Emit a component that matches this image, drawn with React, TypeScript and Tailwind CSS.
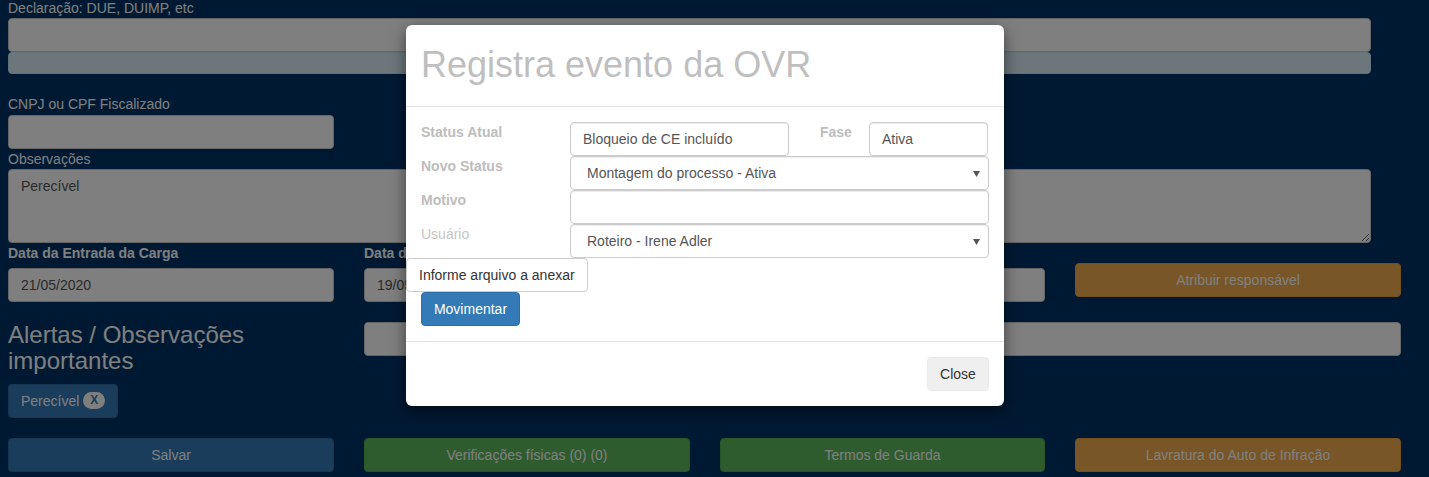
import React from 'react';

const FONT = "font-['Liberation_Sans',Arial,sans-serif]";

function PageInput({ value = '', className = '' }: { value?: string; className?: string }) {
  return (
    <div className={`h-[34px] bg-white border border-[#ccc] rounded-[4px] px-[12px] py-[6px] text-[#555] ${className}`}>
      {value}
    </div>
  );
}

function PageButton({ label, tone }: { label: string; tone: 'blue' | 'green' | 'orange' }) {
  const tones = {
    blue: 'bg-[#337ab7] border-[#2e6da4]',
    green: 'bg-[#5cb85c] border-[#4cae4c]',
    orange: 'bg-[#f0ad4e] border-[#eea236]',
  };
  return (
    <div className={`h-[34px] flex items-center justify-center border rounded-[4px] text-white ${tones[tone]}`}>
      {label}
    </div>
  );
}

function Caret() {
  return (
    <svg width="7" height="6" viewBox="0 0 7 6" className="absolute right-[8px] top-[14px]">
      <path d="M0 0h7L3.5 6z" fill="#555" />
    </svg>
  );
}

function ModalField({ value = '', select = false, className = '' }: { value?: string; select?: boolean; className?: string }) {
  return (
    <div
      className={`relative h-[34px] bg-white border border-[#ccc] rounded-[4px] py-[6px] text-[#555] shadow-[inset_0_1px_1px_rgba(0,0,0,0.075)] ${
        select ? 'pl-[16px]' : 'pl-[12px]'
      } ${className}`}
    >
      {value}
      {select && <Caret />}
    </div>
  );
}

function RegistraEventoModal() {
  return (
    <div className="absolute left-[406px] top-[25px] w-[598px] bg-white rounded-[6px] shadow-[0_5px_15px_rgba(0,0,0,0.5)]">
      {/* Header */}
      <div className="px-[15px] pt-[20px] pb-[21px] border-b border-[#e5e5e5]">
        <h1 className="text-[36px] leading-[39.6px] text-[#bfbfbf]">Registra evento da OVR</h1>
      </div>

      {/* Body */}
      <div className="p-[15px]">
        <div className="flex h-[34px]">
          <div className="w-[149px] font-bold text-[#bdbdbd]">Status Atual</div>
          <ModalField value="Bloqueio de CE incluído" className="w-[219px]" />
          <div className="w-[80px] pl-[31px] font-bold text-[#bdbdbd]">Fase</div>
          <ModalField value="Ativa" className="w-[119px]" />
        </div>
        <div className="flex h-[34px]">
          <div className="w-[149px] font-bold text-[#bdbdbd]">Novo Status</div>
          <ModalField value="Montagem do processo - Ativa" select className="flex-1" />
        </div>
        <div className="flex h-[34px]">
          <div className="w-[149px] font-bold text-[#bdbdbd]">Motivo</div>
          <ModalField className="flex-1" />
        </div>
        <div className="flex h-[34px]">
          <div className="w-[149px] text-[#c6c6c6]">Usuário</div>
          <ModalField value="Roteiro - Irene Adler" select className="flex-1" />
        </div>
        <div className="-ml-[15px] w-fit h-[34px] border border-[#ccc] rounded-[4px] px-[12px] py-[6px] text-[#333] whitespace-nowrap">
          Informe arquivo a anexar
        </div>
        <div className="w-[99px] h-[34px] flex items-center justify-center bg-[#337ab7] border border-[#2e6da4] rounded-[4px] text-white">
          Movimentar
        </div>
      </div>

      {/* Footer */}
      <div className="p-[15px] border-t border-[#e5e5e5] flex justify-end">
        <div className="w-[62px] h-[34px] flex items-center justify-center bg-[#efefef] border border-[#eaeaea] rounded-[4px] text-[#333]">
          Close
        </div>
      </div>
    </div>
  );
}

export default function App() {
  return (
    <div className={`relative h-[477px] overflow-hidden bg-[#003366] text-[14px] leading-[20px] text-white ${FONT}`}>
      <div className="pl-[8px]">
        <div className="-mt-[2px] h-[20px]">Declaração: DUE, DUIMP, etc</div>
        <PageInput className="w-[1363px]" />
        <div className="w-[1363px] h-[22px] bg-[#d9edf7] border border-[#bce8f1] rounded-[4px]" />

        <div className="mt-[20px] h-[20px]">CNPJ ou CPF Fiscalizado</div>
        <PageInput className="mt-[1px] w-[326px]" />

        <div className="h-[20px]">Observações</div>
        <textarea
          readOnly
          defaultValue="Perecível"
          className="block w-[1363px] h-[74px] bg-white border border-[#ccc] rounded-[4px] px-[12px] py-[6px] text-[#555] outline-none"
        />

        <div className="grid grid-cols-[326px_326px_325px_326px] gap-x-[30px]">
          <div>
            <div className="h-[20px] font-bold">Data da Entrada da Carga</div>
            <PageInput value="21/05/2020" className="mt-[5px]" />
          </div>
          <div>
            <div className="h-[20px] font-bold">Data do Registro</div>
            <PageInput value="19/05/2020" className="mt-[5px]" />
          </div>
          <div>
            <div className="h-[20px] font-bold">Responsável</div>
            <PageInput className="mt-[5px]" />
          </div>
          <div className="mt-[20px]">
            <PageButton label="Atribuir responsável" tone="orange" />
          </div>
        </div>

        <div className="mt-[20px] grid grid-cols-[326px_326px_325px_326px] gap-x-[30px] items-start">
          <div>
            <h3 className="text-[24px] leading-[26.4px]">Alertas / Observações importantes</h3>
            <div className="mt-[9px] inline-flex items-center h-[34px] px-[12px] bg-[#337ab7] border border-[#2e6da4] rounded-[4px]">
              Perecível
              <span className="ml-[4px] px-[7px] h-[17px] leading-[17px] rounded-[10px] bg-white text-[#337ab7] text-[12px] font-bold">
                X
              </span>
            </div>
          </div>
          <PageInput className="col-span-3" />
        </div>

        <div className="mt-[20px] grid grid-cols-[326px_326px_325px_326px] gap-x-[30px]">
          <PageButton label="Salvar" tone="blue" />
          <PageButton label="Verificações físicas (0) (0)" tone="green" />
          <PageButton label="Termos de Guarda" tone="green" />
          <PageButton label="Lavratura do Auto de Infração" tone="orange" />
        </div>
      </div>

      {/* Modal backdrop */}
      <div className="absolute inset-0 bg-black/50" />
      <RegistraEventoModal />
    </div>
  );
}
